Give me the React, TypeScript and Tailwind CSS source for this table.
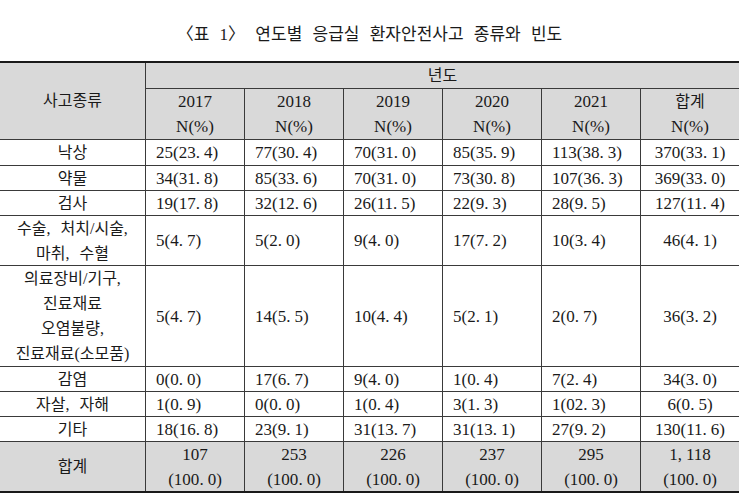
import React from "react";

const FONT = { fontFamily: '"Liberation Serif", "Noto Sans CJK KR", serif' };

type Row = { label: string[]; vals: string[]; total: string; h: number };

const rows: Row[] = [
  { label: ["낙상"], vals: ["25(23.4)", "77(30.4)", "70(31.0)", "85(35.9)", "113(38.3)"], total: "370(33.1)", h: 25 },
  { label: ["약물"], vals: ["34(31.8)", "85(33.6)", "70(31.0)", "73(30.8)", "107(36.3)"], total: "369(33.0)", h: 24 },
  { label: ["검사"], vals: ["19(17.8)", "32(12.6)", "26(11.5)", "22(9.3)", "28(9.5)"], total: "127(11.4)", h: 24 },
  { label: ["수술, 처치/시술,", "마취, 수혈"], vals: ["5(4.7)", "5(2.0)", "9(4.0)", "17(7.2)", "10(3.4)"], total: "46(4.1)", h: 49 },
  {
    label: ["의료장비/기구,", "진료재료", "오염불량,", "진료재료(소모품)"],
    vals: ["5(4.7)", "14(5.5)", "10(4.4)", "5(2.1)", "2(0.7)"],
    total: "36(3.2)",
    h: 100,
  },
  { label: ["감염"], vals: ["0(0.0)", "17(6.7)", "9(4.0)", "1(0.4)", "7(2.4)"], total: "34(3.0)", h: 24 },
  { label: ["자살, 자해"], vals: ["1(0.9)", "0(0.0)", "1(0.4)", "3(1.3)", "1(02.3)"], total: "6(0.5)", h: 24 },
  { label: ["기타"], vals: ["18(16.8)", "23(9.1)", "31(13.7)", "31(13.1)", "27(9.2)"], total: "130(11.6)", h: 24 },
];

function Num({ s }: { s: string }) {
  const parts = s.split(/([.,])/);
  return (
    <>
      {parts.map((p, i) =>
        p === "." || p === "," ? (
          <span key={i} className="tracking-[4px]">
            {p}
          </span>
        ) : (
          <React.Fragment key={i}>{p}</React.Fragment>
        )
      )}
    </>
  );
}

export default function App() {
  const years = ["2017", "2018", "2019", "2020", "2021"];
  const totals = ["107", "253", "226", "237", "295", "1,118"];
  return (
    <div className="w-[745px] h-[498px] bg-white text-[#1a1a1a]" style={FONT}>
      <div className="w-[739px] h-[61px] pt-[22px] text-center text-[17px] leading-[26px] [word-spacing:6px] whitespace-nowrap">
        〈표 1〉 연도별 응급실 환자안전사고 종류와 빈도
      </div>
      <div
        className="w-[739px] grid grid-cols-[145px_repeat(6,98px)] gap-px bg-[#3a3a3a] border-y-2 border-[#1a1a1a]"
        style={{ gridTemplateRows: `25px 50px ${rows.map((r) => r.h + "px").join(" ")} 49px` }}
      >
        <div className="row-span-2 bg-[#d9d9d9] flex items-center justify-center text-[16px]">사고종류</div>
        <div className="col-span-6 bg-[#d9d9d9] flex items-center justify-center text-[16px] leading-[25px]">년도</div>
        {years.map((y) => (
          <div key={y} className="bg-[#d9d9d9] flex flex-col items-center justify-center text-[17px] leading-[25px]">
            <span>{y}</span>
            <span>N(%)</span>
          </div>
        ))}
        <div className="bg-[#d9d9d9] flex flex-col items-center justify-center leading-[25px]">
          <span className="text-[16px]">합계</span>
          <span className="text-[17px]">N(%)</span>
        </div>
        {rows.map((r, ri) => (
          <React.Fragment key={ri}>
            <div className="bg-white flex flex-col items-center justify-center text-[16px] leading-[25px] [word-spacing:6px]">
              {r.label.map((l, li) => (
                <span key={li} className="whitespace-nowrap">
                  {l}
                </span>
              ))}
            </div>
            {r.vals.map((v, vi) => (
              <div key={vi} className="bg-white flex items-center pl-[10px] text-[17px] leading-[25px] whitespace-nowrap">
                <Num s={v} />
              </div>
            ))}
            <div className="bg-white flex items-center justify-center text-[17px] leading-[25px] whitespace-nowrap">
              <Num s={r.total} />
            </div>
          </React.Fragment>
        ))}
        <div className="bg-[#d9d9d9] flex items-center justify-center text-[16px]">합계</div>
        {totals.map((t, ti) => (
          <div key={ti} className="bg-[#d9d9d9] flex flex-col items-center justify-center text-[17px] leading-[25px]">
            <span>
              <Num s={t} />
            </span>
            <span>
              <Num s="(100.0)" />
            </span>
          </div>
        ))}
      </div>
    </div>
  );
}
